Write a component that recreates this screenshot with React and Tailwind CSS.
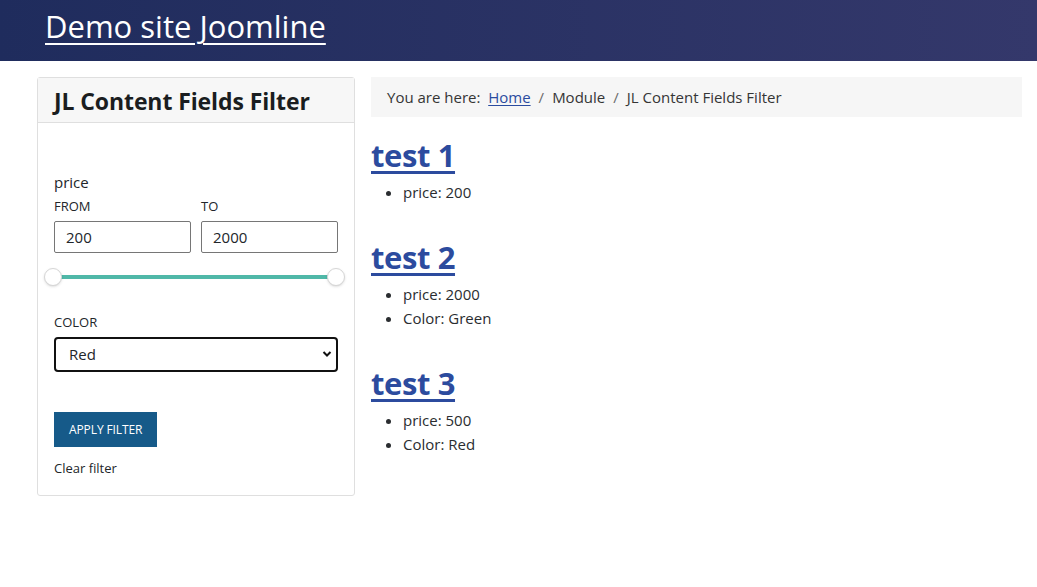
import { useState } from "react";

const items = [
  { title: "test 1", fields: ["price: 200"] },
  { title: "test 2", fields: ["price: 2000", "Color: Green"] },
  { title: "test 3", fields: ["price: 500", "Color: Red"] },
];

function RangeSlider() {
  return (
    <div className="relative h-[18px] mt-[15px] ml-[-10px] mr-[-7px]">
      <div className="absolute left-[9px] right-[9px] top-[7px] h-[4px] bg-[#50b8a8] rounded" />
      <div className="absolute left-0 top-0 w-[18px] h-[18px] rounded-full bg-white border border-[#d6d6d6] shadow-sm" />
      <div className="absolute right-0 top-0 w-[18px] h-[18px] rounded-full bg-white border border-[#d6d6d6] shadow-sm" />
    </div>
  );
}

export default function App() {
  const [from, setFrom] = useState("200");
  const [to, setTo] = useState("2000");
  const [color, setColor] = useState("Red");

  return (
    <div className="min-h-screen bg-white text-[#22262a]" style={{ fontFamily: '"Open Sans", "Noto Sans", sans-serif' }}>
      <header className="h-[61px] bg-gradient-to-r from-[#1f2c5d] to-[#34386b] pl-[45px] flex items-start">
        <a href="#" className="text-white text-[31px] leading-none mt-[11px] underline underline-offset-[5px] decoration-[2px] tracking-[0px]">
          Demo site Joomline
        </a>
      </header>

      <div className="flex gap-[16px] pl-[37px] pr-[15px] pt-[16px]">
        {/* sidebar */}
        <aside className="w-[318px] shrink-0 border border-[#dfdfdf] rounded-[3px] self-start">
          <div className="h-[45px] bg-[#f7f7f7] border-b border-[#dfdfdf] px-[16px] flex items-center">
            <h3 className="text-[23px] font-bold text-[#1a1d20] tracking-[-0.1px] mt-[3px]">JL Content Fields Filter</h3>
          </div>
          <div className="px-[16px] pt-[48px] pb-[18px]">
            <div className="text-[15px] leading-[22px]">price</div>
            <div className="flex gap-[10px] mt-[4px]">
              <label className="w-[137px] text-[13px] leading-[18px]">FROM</label>
              <label className="w-[137px] text-[13px] leading-[18px]">TO</label>
            </div>
            <div className="flex gap-[10px] mt-[6px]">
              <input
                value={from}
                onChange={(e) => setFrom(e.target.value)}
                className="w-[137px] h-[32px] border border-[#767676] rounded-[2px] px-[11px] text-[15px] outline-none"
              />
              <input
                value={to}
                onChange={(e) => setTo(e.target.value)}
                className="w-[137px] h-[32px] border border-[#767676] rounded-[2px] px-[11px] text-[15px] outline-none"
              />
            </div>
            <RangeSlider />

            <div className="text-[13px] leading-[18px] mt-[27px]">COLOR</div>
            <div className="relative mt-[6px]">
              <select
                value={color}
                onChange={(e) => setColor(e.target.value)}
                className="appearance-none w-full h-[35px] border-2 border-[#111] rounded-[4px] pl-[13px] text-[15px] bg-white outline-none"
              >
                <option>Red</option>
                <option>Green</option>
              </select>
              <svg className="absolute right-[6px] top-[13px] pointer-events-none" width="10" height="8" viewBox="0 0 10 8">
                <path d="M1.5 2 L5 5.5 L8.5 2" stroke="#111" strokeWidth="2" fill="none" />
              </svg>
            </div>

            <button className="mt-[40px] h-[35px] px-[15px] bg-[#165a89] text-white text-[12px] tracking-[-0.1px]">
              APPLY FILTER
            </button>
            <div className="mt-[12px] text-[13px] leading-[18px]">
              <a href="#">Clear filter</a>
            </div>
          </div>
        </aside>

        {/* main */}
        <main className="flex-1">
          <nav className="h-[40px] bg-[#f6f6f6] px-[16px] flex items-center text-[15px] text-[#353535]">
            <span>You are here:&nbsp;&nbsp;</span>
            <a href="#" className="text-[#2a4b9f] underline underline-offset-2">Home</a>
            <span className="px-[8px] text-[#6c6c6c]">/</span>
            <span>Module</span>
            <span className="px-[8px] text-[#6c6c6c]">/</span>
            <span>JL Content Fields Filter</span>
          </nav>

          <div className="pt-[20px]">
            {items.map((it, i) => (
              <div key={it.title} className={i === 0 ? "" : "mt-[35px]"}>
                <h2 className="text-[31px] font-bold leading-[36px] tracking-[-0.4px]">
                  <a href="#" className="text-[#2c4b9e] underline underline-offset-[4px] decoration-[3px]">{it.title}</a>
                </h2>
                <ul className="list-disc pl-[32px] mt-[7px] text-[15px] leading-[24px] text-[#2a2d30]">
                  {it.fields.map((f) => (
                    <li key={f}>{f}</li>
                  ))}
                </ul>
              </div>
            ))}
          </div>
        </main>
      </div>
    </div>
  );
}
